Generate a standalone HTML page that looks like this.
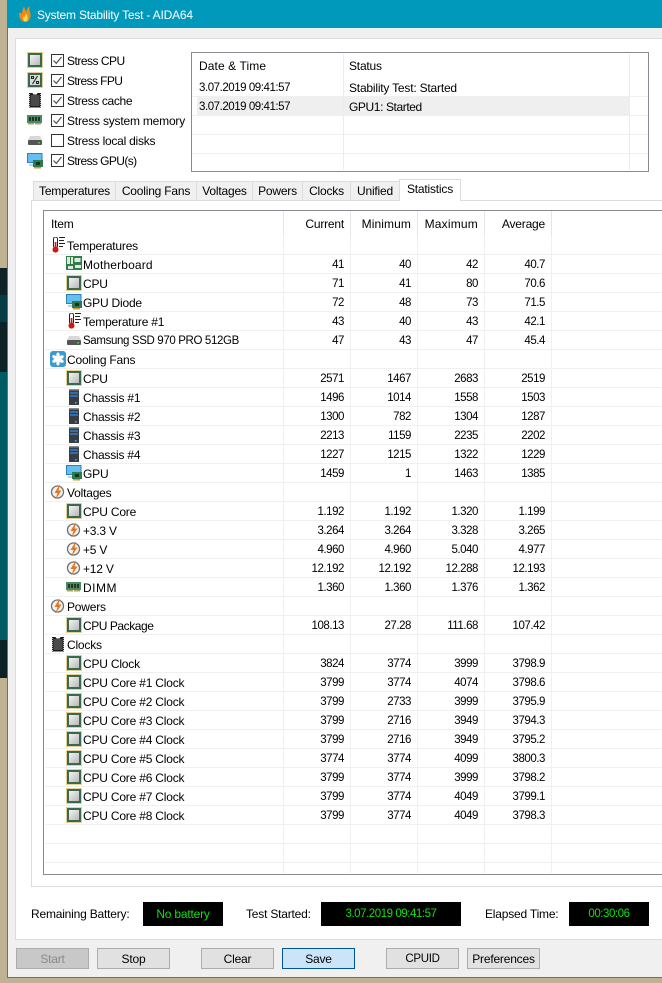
<!DOCTYPE html>
<html><head><meta charset="utf-8"><title>System Stability Test - AIDA64</title>
<style>
html,body{margin:0;padding:0;width:662px;height:983px;overflow:hidden;background:#bfb292}
body{position:relative;font-family:"Liberation Sans",sans-serif;font-size:12px;letter-spacing:-.2px;color:#000}
.a{position:absolute;white-space:nowrap}
.t{position:absolute;white-space:nowrap;line-height:14px}
.n{font-size:11.5px;letter-spacing:-.45px}
svg.i{position:absolute;width:16px;height:16px;overflow:visible}
.cb{position:absolute;left:51px;width:11px;height:11px;border:1px solid #333;background:#fff}
.cb svg{position:absolute;left:0;top:0;width:11px;height:11px}
.tab{position:absolute;top:181px;height:19px;box-sizing:border-box;background:#f0f0f0;border:1px solid #dcdcdc;border-bottom:0;text-align:center;line-height:19px}
.hs{position:absolute;top:211px;height:25px;width:1px;background:#e5e5e5}
.h{position:absolute;top:217px;line-height:14px}
table{position:absolute;left:45px;top:236px;border-collapse:separate;border-spacing:0;table-layout:fixed;width:617px}
td{height:19px;box-sizing:border-box;padding:2px 6px 0 0;border-bottom:1px solid #f0f0f0;border-right:1px solid #f0f0f0;text-align:right;line-height:16px;overflow:hidden;white-space:nowrap;font-size:11.5px;letter-spacing:-.45px}
td:first-child{position:relative;text-align:left;padding-left:38px;overflow:visible;font-size:12px;letter-spacing:-.2px}
td.c{padding-left:22px}
td:last-child{border-right:0;padding:0}
td svg{left:21px;top:1px}
td.c svg{left:5px}
.blk{position:absolute;top:902px;height:24px;background:#000;color:#10e010;text-align:center;line-height:24px;font-size:11.5px;letter-spacing:-.45px}
.btn{position:absolute;top:948px;width:73px;height:21px;box-sizing:border-box;background:#e1e1e1;border:1px solid #adadad;text-align:center;line-height:20px}
</style></head><body>
<svg width="0" height="0" style="position:absolute"><defs>
<linearGradient id="g" x1="0" y1="0" x2="1" y2="1"><stop offset="0" stop-color="#f4f4f4"/><stop offset="1" stop-color="#b8b8b8"/></linearGradient>
<symbol id="cpu" viewBox="0 0 16 16"><rect x=".5" y=".5" width="15" height="15" fill="none" stroke="#c9a02e" stroke-dasharray="1 1"/><rect x="1" y="1" width="14" height="14" fill="#3a6a4e"/><rect x="3" y="3" width="10" height="10" fill="url(#g)"/></symbol>
<symbol id="fpu" viewBox="0 0 16 16"><rect x=".5" y=".5" width="15" height="15" fill="none" stroke="#c9a02e" stroke-dasharray="1 1"/><rect x="1" y="1" width="14" height="14" fill="#3a6a4e"/><rect x="3" y="3" width="10" height="10" fill="#dcdcdc"/><path d="M4.500 4.500h2v2h-2zM9.500 9.500h2v2h-2zM10.500 4L5.500 12" fill="none" stroke="#222" stroke-width="1.100"/></symbol>
<symbol id="chip" viewBox="0 0 16 16"><path d="M2 1h3.500l1 1.500h3L10.500 1H14v14.500H2z" fill="#1c1c1c"/><path d="M3.500 3h9v11h-9z" fill="#4a4a4a"/><path d="M2.500 2v13M13.500 2v13" stroke="#bdbdbd" stroke-dasharray="1 1"/></symbol>
<symbol id="mem" viewBox="0 0 16 16"><rect x="0" y="3" width="15" height="8" fill="#4b8a63"/><path d="M2 5h2v4H2zM5 5h2v4H5zM8 5h2v4H8zM11 5h2v4h-2z" fill="#26352a"/><path d="M1 11h6v1.500H1zM8 11h6v1.500H8z" fill="#b5a15e"/></symbol>
<symbol id="disk" viewBox="0 0 16 16"><path d="M3 4h10l2 4H1z" fill="#d8d8d8"/><rect x="1" y="8" width="14" height="5" rx="1" fill="#555"/><rect x="11" y="10" width="2" height="1.500" fill="#35d04a"/></symbol>
<symbol id="gpu" viewBox="0 0 16 16"><rect x="0" y="0" width="15.500" height="10" fill="#2a7fc0"/><rect x="1" y="1" width="13.500" height="8" fill="#66bdf0"/><path d="M2 12h5" stroke="#7ba7c7"/><rect x="6" y="7" width="10" height="7" fill="#2f7a4d"/><rect x="9" y="9" width="4" height="3" fill="#16331f"/><path d="M7 14h7v1.500H7z" fill="#c9a02e"/></symbol>
<symbol id="th" viewBox="0 0 16 16"><rect x="3.500" y="0" width="4" height="11" rx="2" fill="#fff" stroke="#222"/><rect x="4.700" y="5" width="1.700" height="7" fill="#d01818"/><circle cx="5.500" cy="12.600" r="3" fill="#d01818"/><path d="M9 .5h6M9 3.500h5M9 6.500h6M9 9.500h4" stroke="#222"/></symbol>
<symbol id="mobo" viewBox="0 0 16 16"><rect x="0" y="0" width="16" height="14" fill="#2f7d48"/><path d="M1 1h3v7H1zM5 1h2v7H5zM8.500 2h6v4h-6zM2 10h5v3H2zM9 9h6v3H9z" fill="#dfeadf"/></symbol>
<symbol id="fan" viewBox="0 0 16 16"><rect width="16" height="16" rx="3" fill="#3d9ad0"/><path d="M8 8C5.500 5.500 6 1.500 8 1.500S10.500 5.500 8 8zM8 8c2.500 2.500 2 6.500 0 6.500S5.500 10.500 8 8zM8 8c3.400-.9 6.300 1.300 5.600 3.100C12.600 12.800 9 11.400 8 8zM8 8C4.600 8.900 1.700 6.700 2.400 4.900 3.400 3.200 7 4.600 8 8zM8 8c.9-3.400 4.400-4.700 5.600-3.100C14.500 6.700 11.400 8.900 8 8zM8 8c-.9 3.400-4.400 4.700-5.600 3.100C1.500 9.300 4.600 7.100 8 8z" fill="#fff"/></symbol>
<symbol id="box" viewBox="0 0 16 16"><rect x="3" y="-.5" width="10" height="17" rx="1" fill="#383d44"/><rect x="3" y="-.5" width="10" height="2" fill="#8a8a8a"/><path d="M4 4h8M4 7h8" stroke="#2a8cf0" stroke-width="1.200"/><rect x="9" y="13" width="1.500" height="1.500" fill="#4af"/></symbol>
<symbol id="volt" viewBox="0 0 16 16"><circle cx="7.500" cy="8" r="6" fill="#f2f2f2" stroke="#707070" stroke-width="1.300"/><path d="M10 0L4.500 9H7.500L5.500 15.500 11.500 6.500H8.500z" fill="#e8751a"/></symbol>
</defs></svg>

<div class="a" style="left:0;top:268px;width:7px;height:27px;background:#0f2225"></div>
<div class="a" style="left:0;top:295px;width:7px;height:27px;background:#063c44"></div>
<div class="a" style="left:0;top:322px;width:7px;height:50px;background:#0e2226"></div>
<div class="a" style="left:0;top:372px;width:7px;height:268px;background:#005a62"></div>
<div class="a" style="left:0;top:640px;width:7px;height:38px;background:#0c2125"></div>

<div class="a" style="left:7px;top:0;width:655px;height:978px;box-sizing:border-box;background:#f0f0f0;border-left:1px solid #1a8fa8;border-bottom:1px solid #1a8fa8"></div>
<div class="a" style="left:8px;top:0;width:654px;height:28px;background:#0099bb"></div>
<svg class="i" style="left:17px;top:5px;height:18px" viewBox="0 0 16 18"><path d="M2 8c0 6 3 9 6.500 9S14 13 13.500 9C13 6 12 5 12.500 1 10 3 9.500 5 9.500 7 8 5 7.500 3 7 1c-1 3-2 5-2 8C4 8 3 7 2 8z" fill="#f08a18"/><path d="M6 12c0 3 1 4.500 2.500 4.500S11 14.500 10.500 12 9.500 9.500 9 8.500C8.500 10 8 11 7.500 12 7 11.500 6.500 11.500 6 12z" fill="#ffd94a"/></svg>
<div class="t" style="left:37px;top:8px;color:#fff;font-size:12px;letter-spacing:-.2px">System Stability Test - AIDA64</div>

<div class="a" style="left:15px;top:38px;width:647px;height:902px;box-sizing:border-box;background:#fff;border:1px solid #dcdcdc;border-right:0"></div>

<svg class="i" style="left:27px;top:52px"><use href="#cpu"/></svg>
<svg class="i" style="left:27px;top:72px"><use href="#fpu"/></svg>
<svg class="i" style="left:27px;top:92px"><use href="#chip"/></svg>
<svg class="i" style="left:27px;top:112px"><use href="#mem"/></svg>
<svg class="i" style="left:27px;top:132px"><use href="#disk"/></svg>
<svg class="i" style="left:27px;top:153px"><use href="#gpu"/></svg>

<div class="cb" style="top:54px"><svg viewBox="0 0 11 11"><path d="M1.500 5.500L4.300 8.300 9.500 2" fill="none" stroke="#555" stroke-width="1.200"/></svg></div>
<div class="cb" style="top:74px"><svg viewBox="0 0 11 11"><path d="M1.500 5.500L4.300 8.300 9.500 2" fill="none" stroke="#555" stroke-width="1.200"/></svg></div>
<div class="cb" style="top:94px"><svg viewBox="0 0 11 11"><path d="M1.500 5.500L4.300 8.300 9.500 2" fill="none" stroke="#555" stroke-width="1.200"/></svg></div>
<div class="cb" style="top:114px"><svg viewBox="0 0 11 11"><path d="M1.500 5.500L4.300 8.300 9.500 2" fill="none" stroke="#555" stroke-width="1.200"/></svg></div>
<div class="cb" style="top:134px"></div>
<div class="cb" style="top:154px"><svg viewBox="0 0 11 11"><path d="M1.500 5.500L4.300 8.300 9.500 2" fill="none" stroke="#555" stroke-width="1.200"/></svg></div>
<div class="t" style="left:67px;top:54px;letter-spacing:-.5px">Stress CPU</div>
<div class="t" style="left:67px;top:74px;letter-spacing:-.6px">Stress FPU</div>
<div class="t" style="left:67px;top:94px;letter-spacing:-.35px">Stress cache</div>
<div class="t" style="left:67px;top:114px">Stress system memory</div>
<div class="t" style="left:67px;top:134px;letter-spacing:-.25px">Stress local disks</div>
<div class="t" style="left:67px;top:154px;letter-spacing:-.6px">Stress GPU(s)</div>

<div class="a" style="left:191px;top:52px;width:458px;height:120px;box-sizing:border-box;background:#fff;border:1px solid #8a8a95"></div>
<div class="a" style="left:197px;top:96px;width:433px;height:19px;background:#efefef"></div>
<div class="a" style="left:192px;top:96px;width:456px;height:1px;background:#f0f0f0"></div>
<div class="a" style="left:192px;top:115px;width:456px;height:1px;background:#f0f0f0"></div>
<div class="a" style="left:192px;top:134px;width:456px;height:1px;background:#f0f0f0"></div>
<div class="a" style="left:192px;top:153px;width:456px;height:1px;background:#f0f0f0"></div>
<div class="a" style="left:343px;top:54px;width:1px;height:116px;background:#ececec"></div>
<div class="a" style="left:629px;top:54px;width:1px;height:116px;background:#ececec"></div>
<div class="t" style="left:199px;top:59px;letter-spacing:.1px">Date &amp; Time</div>
<div class="t" style="left:349px;top:59px">Status</div>
<div class="t n" style="left:199px;top:81px">3.07.2019 09:41:57</div>
<div class="t" style="left:349px;top:81px">Stability Test: Started</div>
<div class="t n" style="left:199px;top:100px">3.07.2019 09:41:57</div>
<div class="t" style="left:349px;top:100px;letter-spacing:-.4px">GPU1: Started</div>

<div class="a" style="left:31px;top:200px;width:631px;height:687px;box-sizing:border-box;background:#fff;border:1px solid #dcdcdc;border-right:0"></div>
<div class="tab" style="left:33px;width:83px">Temperatures</div>
<div class="tab" style="left:115px;width:82px">Cooling Fans</div>
<div class="tab" style="left:196px;width:57px">Voltages</div>
<div class="tab" style="left:252px;width:51px">Powers</div>
<div class="tab" style="left:302px;width:49px">Clocks</div>
<div class="tab" style="left:350px;width:50px">Unified</div>
<div class="tab" style="left:399px;top:179px;width:62px;height:22px;background:#fff;line-height:18px">Statistics</div>

<div class="a" style="left:43px;top:210px;width:619px;height:665px;box-sizing:border-box;background:#fff;border:1px solid #8a8a95;border-right:0"></div>
<div class="hs" style="left:283px"></div><div class="hs" style="left:350px"></div><div class="hs" style="left:417px"></div><div class="hs" style="left:484px"></div><div class="hs" style="left:551px"></div>
<div class="h" style="left:51px">Item</div>
<div class="h" style="right:318px">Current</div>
<div class="h" style="right:251px;letter-spacing:.1px">Minimum</div>
<div class="h" style="right:184px;letter-spacing:.2px">Maximum</div>
<div class="h" style="right:117px">Average</div>

<table><colgroup><col style="width:239px"><col style="width:67px"><col style="width:67px"><col style="width:67px"><col style="width:67px"><col></colgroup>
<tr><td class="c"><svg class="i"><use href="#th"/></svg>Temperatures</td><td></td><td></td><td></td><td></td><td></td></tr>
<tr><td style="letter-spacing:.15px"><svg class="i"><use href="#mobo"/></svg>Motherboard</td><td>41</td><td>40</td><td>42</td><td>40.7</td><td></td></tr>
<tr><td><svg class="i"><use href="#cpu"/></svg>CPU</td><td>71</td><td>41</td><td>80</td><td>70.6</td><td></td></tr>
<tr><td><svg class="i"><use href="#gpu"/></svg>GPU Diode</td><td>72</td><td>48</td><td>73</td><td>71.5</td><td></td></tr>
<tr><td><svg class="i"><use href="#th"/></svg>Temperature #1</td><td>43</td><td>40</td><td>43</td><td>42.1</td><td></td></tr>
<tr><td style="font-size:11.5px;letter-spacing:-.36px"><svg class="i"><use href="#disk"/></svg>Samsung SSD 970 PRO 512GB</td><td>47</td><td>43</td><td>47</td><td>45.4</td><td></td></tr>
<tr><td class="c"><svg class="i"><use href="#fan"/></svg>Cooling Fans</td><td></td><td></td><td></td><td></td><td></td></tr>
<tr><td><svg class="i"><use href="#cpu"/></svg>CPU</td><td>2571</td><td>1467</td><td>2683</td><td>2519</td><td></td></tr>
<tr><td><svg class="i"><use href="#box"/></svg>Chassis #1</td><td>1496</td><td>1014</td><td>1558</td><td>1503</td><td></td></tr>
<tr><td><svg class="i"><use href="#box"/></svg>Chassis #2</td><td>1300</td><td>782</td><td>1304</td><td>1287</td><td></td></tr>
<tr><td><svg class="i"><use href="#box"/></svg>Chassis #3</td><td>2213</td><td>1159</td><td>2235</td><td>2202</td><td></td></tr>
<tr><td><svg class="i"><use href="#box"/></svg>Chassis #4</td><td>1227</td><td>1215</td><td>1322</td><td>1229</td><td></td></tr>
<tr><td><svg class="i"><use href="#gpu"/></svg>GPU</td><td>1459</td><td>1</td><td>1463</td><td>1385</td><td></td></tr>
<tr><td class="c"><svg class="i"><use href="#volt"/></svg>Voltages</td><td></td><td></td><td></td><td></td><td></td></tr>
<tr><td><svg class="i"><use href="#cpu"/></svg>CPU Core</td><td>1.192</td><td>1.192</td><td>1.320</td><td>1.199</td><td></td></tr>
<tr><td><svg class="i"><use href="#volt"/></svg>+3.3 V</td><td>3.264</td><td>3.264</td><td>3.328</td><td>3.265</td><td></td></tr>
<tr><td><svg class="i"><use href="#volt"/></svg>+5 V</td><td>4.960</td><td>4.960</td><td>5.040</td><td>4.977</td><td></td></tr>
<tr><td><svg class="i"><use href="#volt"/></svg>+12 V</td><td>12.192</td><td>12.192</td><td>12.288</td><td>12.193</td><td></td></tr>
<tr><td style="letter-spacing:.5px"><svg class="i"><use href="#mem"/></svg>DIMM</td><td>1.360</td><td>1.360</td><td>1.376</td><td>1.362</td><td></td></tr>
<tr><td class="c"><svg class="i"><use href="#volt"/></svg>Powers</td><td></td><td></td><td></td><td></td><td></td></tr>
<tr><td style="letter-spacing:-.45px"><svg class="i"><use href="#cpu"/></svg>CPU Package</td><td>108.13</td><td>27.28</td><td>111.68</td><td>107.42</td><td></td></tr>
<tr><td class="c"><svg class="i"><use href="#chip"/></svg>Clocks</td><td></td><td></td><td></td><td></td><td></td></tr>
<tr><td><svg class="i"><use href="#cpu"/></svg>CPU Clock</td><td>3824</td><td>3774</td><td>3999</td><td>3798.9</td><td></td></tr>
<tr><td><svg class="i"><use href="#cpu"/></svg>CPU Core #1 Clock</td><td>3799</td><td>3774</td><td>4074</td><td>3798.6</td><td></td></tr>
<tr><td><svg class="i"><use href="#cpu"/></svg>CPU Core #2 Clock</td><td>3799</td><td>2733</td><td>3999</td><td>3795.9</td><td></td></tr>
<tr><td><svg class="i"><use href="#cpu"/></svg>CPU Core #3 Clock</td><td>3799</td><td>2716</td><td>3949</td><td>3794.3</td><td></td></tr>
<tr><td><svg class="i"><use href="#cpu"/></svg>CPU Core #4 Clock</td><td>3799</td><td>2716</td><td>3949</td><td>3795.2</td><td></td></tr>
<tr><td><svg class="i"><use href="#cpu"/></svg>CPU Core #5 Clock</td><td>3774</td><td>3774</td><td>4099</td><td>3800.3</td><td></td></tr>
<tr><td><svg class="i"><use href="#cpu"/></svg>CPU Core #6 Clock</td><td>3799</td><td>3774</td><td>3999</td><td>3798.2</td><td></td></tr>
<tr><td><svg class="i"><use href="#cpu"/></svg>CPU Core #7 Clock</td><td>3799</td><td>3774</td><td>4049</td><td>3799.1</td><td></td></tr>
<tr><td><svg class="i"><use href="#cpu"/></svg>CPU Core #8 Clock</td><td>3799</td><td>3774</td><td>4049</td><td>3798.3</td><td></td></tr>
<tr><td></td><td></td><td></td><td></td><td></td><td></td></tr>
<tr><td></td><td></td><td></td><td></td><td></td><td></td></tr>
</table>
<div class="a" style="left:283px;top:863px;width:1px;height:10px;background:#f0f0f0"></div>
<div class="a" style="left:350px;top:863px;width:1px;height:10px;background:#f0f0f0"></div>
<div class="a" style="left:417px;top:863px;width:1px;height:10px;background:#f0f0f0"></div>
<div class="a" style="left:484px;top:863px;width:1px;height:10px;background:#f0f0f0"></div>
<div class="a" style="left:551px;top:863px;width:1px;height:10px;background:#f0f0f0"></div>

<div class="t" style="left:31px;top:907px">Remaining Battery:</div>
<div class="blk" style="left:143px;width:80px;font-size:12px;letter-spacing:-.2px">No battery</div>
<div class="t" style="left:246px;top:907px">Test Started:</div>
<div class="blk" style="left:321px;width:140px">3.07.2019 09:41:57</div>
<div class="t" style="left:485px;top:907px">Elapsed Time:</div>
<div class="blk" style="left:569px;width:80px">00:30:06</div>

<div class="btn" style="left:16px;background:#c8c8c8;color:#8a8a8a">Start</div>
<div class="btn" style="left:97px">Stop</div>
<div class="btn" style="left:201px">Clear</div>
<div class="btn" style="left:282px;background:#cce4f7;border-color:#005499">Save</div>
<div class="btn" style="left:386px;font-size:11.5px;letter-spacing:-.3px">CPUID</div>
<div class="btn" style="left:467px">Preferences</div>
</body></html>
